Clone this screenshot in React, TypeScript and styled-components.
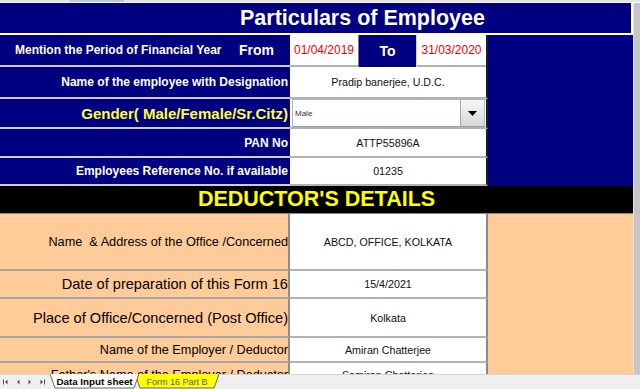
import React from "react";
import styled, { createGlobalStyle } from "styled-components";

const NAVY = "#000080";
const PEACH = "#ffcc99";

const GlobalStyle = createGlobalStyle`
  html, body { margin: 0; padding: 0; background: #fff; overflow: hidden; }
  body { font-family: "Liberation Sans", Arial, sans-serif; }
`;

type Tone = "navy" | "peach";

const Screen = styled.div`
  width: 640px;
  height: 389px;
  display: flex;
  flex-direction: column;
  overflow: hidden;
`;

const TopStrip = styled.div`
  height: 3px;
  flex-shrink: 0;
  display: flex;
  background: #e6e6e6;
  border-bottom: 1px solid #fafafa;
  box-sizing: border-box;
`;

const Selection = styled.div`
  margin-left: 70px;
  width: 54px;
  background: #b6cbe8;
`;

const Main = styled.div`
  flex: 1;
  min-height: 0;
  display: flex;
  overflow: hidden;
`;

const Sheet = styled.div`
  width: 633px;
  flex-shrink: 0;
  display: grid;
  grid-template-columns: 290px 198px 145px;
  grid-template-rows: 32px 32px 32px 30px 29px 28px 28px 57px 28px 39px 25px 26px;
  align-self: flex-start;
`;

const Gutter = styled.div`
  flex: 1;
  background: #c6c6c6;
  border-left: 1px solid #e4e4e4;
`;

const Banner = styled.div<{ $bg: string; $color: string; $offset?: number }>`
  grid-column: 1 / -1;
  display: flex;
  align-items: center;
  justify-content: center;
  box-sizing: border-box;
  padding-left: ${(p) => p.$offset ?? 0}px;
  background: ${(p) => p.$bg};
  color: ${(p) => p.$color};
  font-size: 21.5px;
  font-weight: bold;
  white-space: nowrap;
`;

const TitleBanner = styled(Banner)`
  border-bottom: 2px solid #fff;
  border-right: 2px solid #fff;
`;

const SectionBanner = styled(Banner)`
  border-bottom: 1px solid #8a8a8a;
`;

const Label = styled.div<{ $tone: Tone; $size?: number; $bold?: boolean; $color?: string }>`
  grid-column: 1;
  display: flex;
  align-items: center;
  justify-content: flex-end;
  box-sizing: border-box;
  padding-right: ${(p) => (p.$tone === "navy" ? 2 : 0)}px;
  background: ${(p) => (p.$tone === "navy" ? NAVY : PEACH)};
  color: ${(p) => p.$color ?? (p.$tone === "navy" ? "#fff" : "#000")};
  font-size: ${(p) => p.$size ?? 12}px;
  font-weight: ${(p) => (p.$bold ? "bold" : "normal")};
  border-bottom: 2px solid ${(p) => (p.$tone === "navy" ? "#cdcdda" : "#a6a6a6")};
  border-right: ${(p) => (p.$tone === "peach" ? "2px solid #8c8c8c" : "none")};
  white-space: pre;
`;

const PeriodLabel = styled(Label)`
  justify-content: space-between;
  padding: 0 16px 0 15px;
`;

const FromText = styled.span`
  font-size: 14px;
`;

const Value = styled.div<{ $tone: Tone }>`
  grid-column: 2;
  display: flex;
  align-items: center;
  justify-content: center;
  box-sizing: border-box;
  background: #fff;
  color: #111;
  font-size: 10.7px;
  border-bottom: 2px solid #b2b2b2;
  border-right: 2px solid ${(p) => (p.$tone === "navy" ? "#1c1c2c" : "#8a8a8a")};
  white-space: nowrap;
`;

const PeriodValue = styled(Value)`
  align-items: stretch;
  justify-content: flex-start;
  border-bottom: none;
`;

const DateCell = styled.div<{ $w?: number }>`
  ${(p) => (p.$w ? `width: ${p.$w}px;` : "flex: 1;")}
  display: flex;
  align-items: center;
  justify-content: center;
  box-sizing: border-box;
  color: #ee0000;
  font-size: 12px;
  border-bottom: 2px solid #b2b2b2;
`;

const ToCell = styled.div`
  width: 59px;
  display: flex;
  align-items: center;
  justify-content: center;
  box-sizing: border-box;
  background: ${NAVY};
  color: #fff;
  font-size: 14px;
  font-weight: bold;
  border-left: 1px solid #7a7a7a;
  border-right: 1px solid #d0d0d0;
`;

const DropValue = styled(Value)`
  align-items: stretch;
  padding: 0 1px 0 2px;
`;

const Dropdown = styled.div`
  flex: 1;
  display: flex;
  background: #fff;
  border: 1px solid #a9b8c4;
  border-bottom-color: #8aa4a8;
`;

const DropText = styled.span`
  flex: 1;
  display: flex;
  align-items: center;
  padding-left: 2px;
  font-size: 8px;
  color: #333;
`;

const DropButton = styled.div`
  width: 23px;
  display: flex;
  align-items: center;
  justify-content: center;
  background: linear-gradient(#f6f6f6, #d8d8d8);
  border-left: 1px solid #a8a8a8;
`;

const SideFill = styled.div<{ $bg: string; $start: number; $span: number }>`
  grid-column: 3;
  grid-row: ${(p) => p.$start} / span ${(p) => p.$span};
  background: ${(p) => p.$bg};
`;

const TabBar = styled.div`
  height: 15px;
  flex-shrink: 0;
  display: flex;
  align-items: stretch;
  background: #efefef;
  border-top: 1px solid #d4d4d4;
  box-sizing: border-box;
`;

const NavGroup = styled.div`
  width: 50px;
  display: flex;
  align-items: center;
`;

const NavButton = styled.div`
  width: 12px;
  height: 100%;
  display: flex;
  align-items: center;
  justify-content: center;
`;

const Tabs = styled.div`
  display: flex;
  gap: 0;
`;

const TabWrap = styled.div<{ $w: number; $active?: boolean }>`
  position: relative;
  width: ${(p) => p.$w}px;
  margin-right: -4px;
  z-index: ${(p) => (p.$active ? 2 : 1)};
  display: flex;
  align-items: center;
  justify-content: center;
  line-height: 1;
`;

const TabShape = styled.svg`
  position: absolute;
  left: 0;
  top: -1px;
`;

const TabLabel = styled.span<{ $active?: boolean }>`
  position: relative;
  font-size: ${(p) => (p.$active ? 9.8 : 9)}px;
  font-weight: ${(p) => (p.$active ? "bold" : "normal")};
  color: ${(p) => (p.$active ? "#000" : "#5a5a3a")};
  white-space: nowrap;
`;

const NavIcon = ({ dir, bar }: { dir: "left" | "right"; bar?: boolean }) => (
  <svg width="8" height="8" viewBox="0 0 8 8">
    {dir === "left" ? (
      <>
        {bar && <rect x="1" y="1.5" width="1" height="5" fill="#505050" />}
        <polygon points="5.5,1.5 3,4 5.5,6.5" fill="#505050" />
      </>
    ) : (
      <>
        <polygon points="2.5,1.5 5,4 2.5,6.5" fill="#505050" />
        {bar && <rect x="6" y="1.5" width="1" height="5" fill="#505050" />}
      </>
    )}
  </svg>
);

const SheetTab = ({ label, width, fill, active }: { label: string; width: number; fill: string; active?: boolean }) => (
  <TabWrap $w={width} $active={active}>
    <TabShape width={width} height={15}>
      <polygon points={`0,0 ${width},0 ${width - 5},14 5,14`} fill={fill} />
      <polyline points={`0,0 5,14 ${width - 5},14 ${width},0`} fill="none" stroke="#6a6a6a" strokeWidth="1" />
    </TabShape>
    <TabLabel $active={active}>{label}</TabLabel>
  </TabWrap>
);

const employeeRows = [
  { label: "Name of the employee with Designation", value: "Pradip banerjee, U.D.C." },
];

const idRows = [
  { label: "PAN No", value: "ATTP55896A" },
  { label: "Employees Reference No. if available", value: "01235" },
];

const deductorRows = [
  { label: "Name  & Address of the Office /Concerned", value: "ABCD, OFFICE, KOLKATA", size: 12.7 },
  { label: "Date of preparation of this Form 16", value: "15/4/2021", size: 14.6 },
  { label: "Place of Office/Concerned (Post Office)", value: "Kolkata", size: 14.6 },
  { label: "Name of the Employer / Deductor", value: "Amiran Chatterjee", size: 12.7 },
  { label: "Father's Name of the Employer / Deductor", value: "Samiran Chatterjee", size: 12.7 },
];

const App: React.FC = () => (
  <Screen>
    <GlobalStyle />
    <TopStrip>
      <Selection />
    </TopStrip>
    <Main>
      <Sheet>
        <TitleBanner $bg={NAVY} $color="#fff" $offset={94}>Particulars of Employee</TitleBanner>

        <PeriodLabel $tone="navy" $bold>
          <span>Mention the Period of Financial Year</span>
          <FromText>From</FromText>
        </PeriodLabel>
        <PeriodValue $tone="navy">
          <DateCell $w={68}>01/04/2019</DateCell>
          <ToCell>To</ToCell>
          <DateCell>31/03/2020</DateCell>
        </PeriodValue>
        <SideFill $bg={NAVY} $start={2} $span={5} />

        {employeeRows.map((r) => (
          <React.Fragment key={r.label}>
            <Label $tone="navy" $bold>{r.label}</Label>
            <Value $tone="navy">{r.value}</Value>
          </React.Fragment>
        ))}

        <Label $tone="navy" $bold $size={15} $color="#ffff33">Gender( Male/Female/Sr.Citz)</Label>
        <DropValue $tone="navy">
          <Dropdown>
            <DropText>Male</DropText>
            <DropButton>
              <svg width="9" height="5" viewBox="0 0 9 5">
                <polygon points="0,0 9,0 4.5,5" fill="#000" />
              </svg>
            </DropButton>
          </Dropdown>
        </DropValue>

        {idRows.map((r) => (
          <React.Fragment key={r.label}>
            <Label $tone="navy" $bold>{r.label}</Label>
            <Value $tone="navy">{r.value}</Value>
          </React.Fragment>
        ))}

        <SectionBanner $bg="#000" $color="#ffff00">DEDUCTOR'S DETAILS</SectionBanner>

        {deductorRows.map((r) => (
          <React.Fragment key={r.label}>
            <Label $tone="peach" $size={r.size}>{r.label}</Label>
            <Value $tone="peach">{r.value}</Value>
          </React.Fragment>
        ))}
        <SideFill $bg={PEACH} $start={8} $span={5} />
      </Sheet>
      <Gutter />
    </Main>
    <TabBar>
      <NavGroup>
        <NavButton><NavIcon dir="left" bar /></NavButton>
        <NavButton><NavIcon dir="left" /></NavButton>
        <NavButton><NavIcon dir="right" /></NavButton>
        <NavButton><NavIcon dir="right" bar /></NavButton>
      </NavGroup>
      <Tabs>
        <SheetTab label="Data Input sheet" width={89} fill="#fff" active />
        <SheetTab label="Form 16 Part B" width={84} fill="#ffff00" />
      </Tabs>
    </TabBar>
  </Screen>
);

export default App;
